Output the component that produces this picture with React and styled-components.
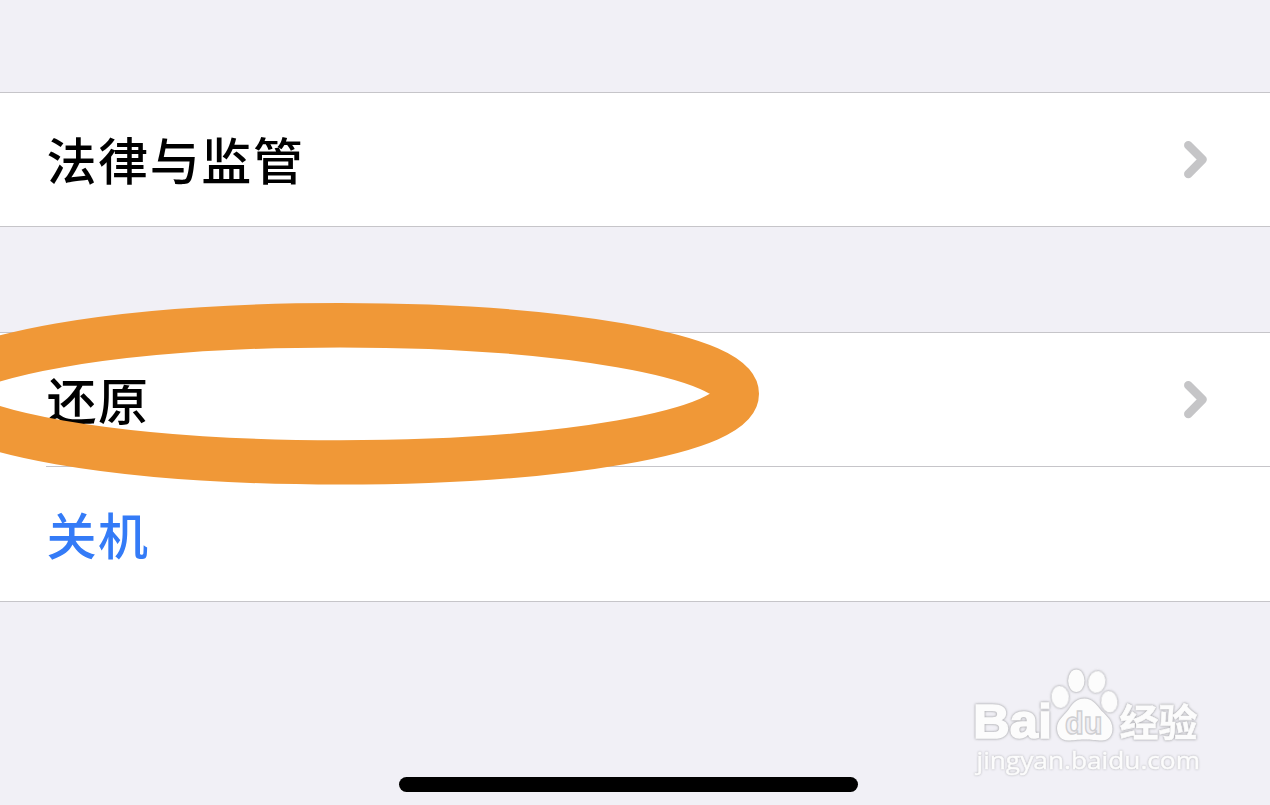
import React from 'react'
import styled, { createGlobalStyle } from 'styled-components'

const GlobalStyle = createGlobalStyle`
  body {
    margin: 0;
    background: #f1f0f6;
  }
`

const Chevron = () => (
  <ChevronIcon viewBox="0 0 24 38">
    <path d="M4.3 4.3 L18.6 18.5 L4.3 32.9" />
  </ChevronIcon>
)

const Watermark = () => (
  <Mark viewBox="965 660 250 125">
    <text className="bold" x="973" y="738" fontSize="49" fontWeight="700" textLength="79" lengthAdjust="spacingAndGlyphs">Bai</text>
    <ellipse cx="1060.2" cy="697" rx="8.7" ry="11" transform="rotate(-6 1060.2 697)" />
    <ellipse cx="1076.3" cy="680.8" rx="8.2" ry="11.3" />
    <ellipse cx="1096.8" cy="682" rx="8.6" ry="11" transform="rotate(10 1096.8 682)" />
    <ellipse cx="1109.3" cy="701.7" rx="8.2" ry="10.8" transform="rotate(-6 1109.3 701.7)" />
    <path d="M1084.5 698.5 C1092 698.5 1096 704 1100 709 C1104 714 1112.5 719 1112.5 729 C1112.5 736 1108 740.5 1102 740.5 C1095 740.5 1092 739.5 1084.5 739.5 C1077 739.5 1074 740.5 1068 740.5 C1061 740.5 1057 735 1057 728 C1057 720 1064 716 1069 709 C1073 703 1077 698.5 1084.5 698.5 Z" />
    <text className="du" x="1065" y="733.5" fontSize="31" fontWeight="700" textLength="37.5" lengthAdjust="spacingAndGlyphs">du</text>
    <text className="cjk" x="1119.5" y="735.5" fontSize="38" fontWeight="700" textLength="78" lengthAdjust="spacingAndGlyphs">经验</text>
    <text className="url" x="976.5" y="769" fontSize="24.5" textLength="223.5" lengthAdjust="spacingAndGlyphs">jingyan.baidu.com</text>
  </Mark>
)

export default class App extends React.PureComponent {
  render () {
    return (
      <Screen>
        <GlobalStyle />
        <Group $gap={92}>
          <Row>
            <Label>法律与监管</Label>
            <Chevron />
          </Row>
        </Group>
        <Group $gap={105}>
          <Row>
            <Label>还原</Label>
            <Chevron />
          </Row>
          <Divider />
          <Row $tall>
            <Label $action>关机</Label>
          </Row>
        </Group>
        <Footer>
          <Watermark />
          <HomeIndicator />
        </Footer>
        <Highlight viewBox="0 0 780 200">
          <ellipse cx="340" cy="98.8" rx="396.8" ry="68.6" />
        </Highlight>
      </Screen>
    )
  }
}

const Screen = styled.div`
  position: relative;
  display: flex;
  flex-direction: column;
  width: 1270px;
  height: 805px;
  overflow: hidden;
  background: #f1f0f6;
  font-family: 'Noto Sans CJK SC', sans-serif;
`

const Group = styled.div`
  margin-top: ${props => props.$gap}px;
  background: #fff;
  border-top: 1px solid #c6c5c9;
  border-bottom: 1px solid #c6c5c9;
`

const Row = styled.div`
  display: flex;
  align-items: center;
  justify-content: space-between;
  box-sizing: border-box;
  height: ${props => props.$tall ? 134 : 133}px;
  padding: 0 62px 0 46.5px;
`

const Divider = styled.div`
  height: 1px;
  margin-left: 46px;
  background: #c6c5c9;
`

const Label = styled.span`
  padding-bottom: ${props => props.$action ? 2 : 3}px;
  color: ${props => props.$action ? '#347bf7' : '#000'};
  font-size: 50px;
  font-weight: 500;
  line-height: 74px;
  letter-spacing: 1.6px;
`

const ChevronIcon = styled.svg`
  width: 24px;
  height: 38px;
  fill: none;
  stroke: #c5c5c7;
  stroke-width: 8.5px;
  stroke-linecap: round;
  stroke-linejoin: round;
`

const Highlight = styled.svg`
  position: absolute;
  top: 295px;
  left: 0;
  width: 780px;
  height: 200px;
  fill: none;
  stroke: #f09837;
  stroke-width: 44.4px;
`

const Footer = styled.div`
  display: flex;
  flex: 1;
  flex-direction: column;
  justify-content: space-between;
  padding: 58px 55px 13px 0;
`

const Mark = styled.svg`
  align-self: flex-end;
  width: 250px;
  height: 125px;
  margin-bottom: -20px;
  fill: #fcfcfc;
  font-family: 'Liberation Sans', sans-serif;

  text,
  path,
  ellipse {
    filter: drop-shadow(0 0 0.8px #a8a8ac) drop-shadow(0 0 0.8px #d0d0d4);
  }

  .bold {
    stroke: #fcfcfc;
    stroke-width: 1.6px;
  }

  .du {
    fill: #f1f0f4;
    stroke: #cfcfd2;
    stroke-width: 1.4px;
    filter: none;
  }

  .cjk {
    stroke: #fcfcfc;
    stroke-width: 0.6px;
    font-family: 'Noto Sans CJK SC', sans-serif;
  }

  .url {
    stroke: #fcfcfc;
    stroke-width: 0.5px;
    font-family: 'Open Sans', sans-serif;
    filter: drop-shadow(0 0 0.8px #b0b0b4);
  }
`

const HomeIndicator = styled.div`
  width: 459px;
  height: 15px;
  margin-left: 399px;
  background: #000;
  border-radius: 8px;
`
